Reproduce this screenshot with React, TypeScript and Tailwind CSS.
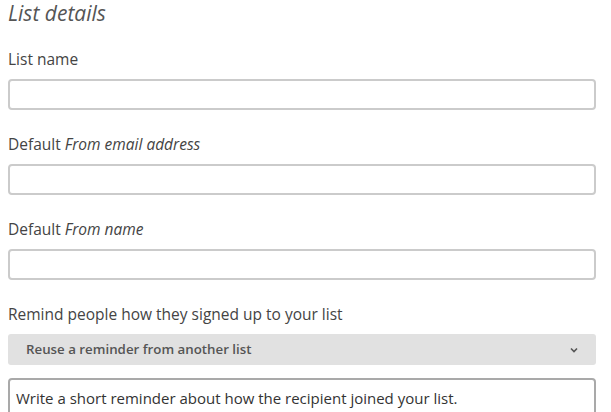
export default function App() {
  return (
    <div className="h-[412px] overflow-hidden pl-2 pr-[15px] pt-px font-['Open_Sans',sans-serif] text-[#444]">
      <h2 className="text-[21px] leading-[25px] italic text-[#555]">List details</h2>

      <div className="mt-[23px]">
        <label className="block text-[15.5px] leading-5">List name</label>
        <input className="mt-2.5 block h-[31px] w-full rounded-sm border-2 border-[#cbcbcb] px-1.5 outline-none" />
      </div>

      <div className="mt-6">
        <label className="block text-[15.5px] leading-5">
          Default <em>From email address</em>
        </label>
        <input className="mt-2.5 block h-[31px] w-full rounded-sm border-2 border-[#cbcbcb] px-1.5 outline-none" />
      </div>

      <div className="mt-6">
        <label className="block text-[15.5px] leading-5">
          Default <em>From name</em>
        </label>
        <input className="mt-2.5 block h-[31px] w-full rounded-sm border-2 border-[#cbcbcb] px-1.5 outline-none" />
      </div>

      <div className="mt-6">
        <label className="block text-[15.5px] leading-5">Remind people how they signed up to your list</label>
        <div className="mt-2.5 flex h-[31px] w-full items-center justify-between rounded-[3px] bg-[#e1e1e1] pl-[18px] pr-[18px]">
          <span className="text-[13.3px] font-semibold text-[#555]">Reuse a reminder from another list</span>
          <svg width="8" height="6" viewBox="0 0 8 6" className="text-[#555]">
            <path d="M1 1.5 L4 4.5 L7 1.5" fill="none" stroke="currentColor" strokeWidth="1.6" />
          </svg>
        </div>
        <div className="mt-[13px] h-[60px] w-full rounded-sm border-2 border-[#a9a9a9] px-1.5 pt-2 text-[15px] leading-5 text-[#333]">
          Write a short reminder about how the recipient joined your list.
        </div>
      </div>
    </div>
  );
}
